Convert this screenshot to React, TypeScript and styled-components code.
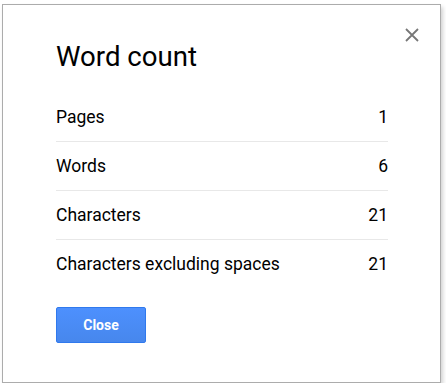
import React from 'react';
import styled, { createGlobalStyle } from 'styled-components';

const GlobalStyle = createGlobalStyle`
  body {
    margin: 0;
    background: #fff;
    font-family: Roboto, "Liberation Sans", Arial, sans-serif;
  }
`;

const Dialog = styled.div`
  position: relative;
  box-sizing: border-box;
  width: 439px;
  height: 379px;
  margin: 4px 0 0 2px;
  padding: 36px 52px 0 53px;
  background: #fff;
  border: 1px solid #acacac;
  box-shadow: 2px 3px 4px rgba(0, 0, 0, 0.18);
`;

const CloseIcon = styled.button`
  position: absolute;
  top: 22px;
  right: 20px;
  width: 16px;
  height: 16px;
  padding: 0;
  border: none;
  background: none;
  cursor: pointer;
  display: flex;
  align-items: center;
  justify-content: center;
`;

const Title = styled.h1`
  margin: 0 0 20px;
  font-size: 27.6px;
  line-height: 32px;
  font-weight: 400;
  color: #000;
`;

const StatList = styled.div`
  display: flex;
  flex-direction: column;
`;

const StatRow = styled.div`
  display: flex;
  justify-content: space-between;
  align-items: center;
  height: 48px;
  font-size: 17.5px;
  color: #000;
  border-bottom: 1px solid #e8e8e8;

  &:last-child {
    border-bottom: none;
  }
`;

const CloseButton = styled.button`
  box-sizing: border-box;
  margin-top: 19px;
  width: 90px;
  height: 36px;
  border: 1px solid #3079ed;
  border-radius: 2px;
  background: linear-gradient(#4d90fe, #4787ed);
  color: #fff;
  font-family: Roboto, "Liberation Sans", Arial, sans-serif;
  font-size: 14px;
  font-weight: 700;
  cursor: pointer;
`;

const stats = [
  { label: 'Pages', value: 1 },
  { label: 'Words', value: 6 },
  { label: 'Characters', value: 21 },
  { label: 'Characters excluding spaces', value: 21 },
];

export default function App() {
  return (
    <>
      <GlobalStyle />
      <Dialog>
        <CloseIcon aria-label="Close">
          <svg width="14" height="14" viewBox="0 0 14 14">
            <path d="M1 1L13 13M13 1L1 13" stroke="#777" strokeWidth="1.8" />
          </svg>
        </CloseIcon>
        <Title>Word count</Title>
        <StatList>
          {stats.map((s) => (
            <StatRow key={s.label}>
              <span>{s.label}</span>
              <span>{s.value}</span>
            </StatRow>
          ))}
        </StatList>
        <CloseButton>Close</CloseButton>
      </Dialog>
    </>
  );
}
